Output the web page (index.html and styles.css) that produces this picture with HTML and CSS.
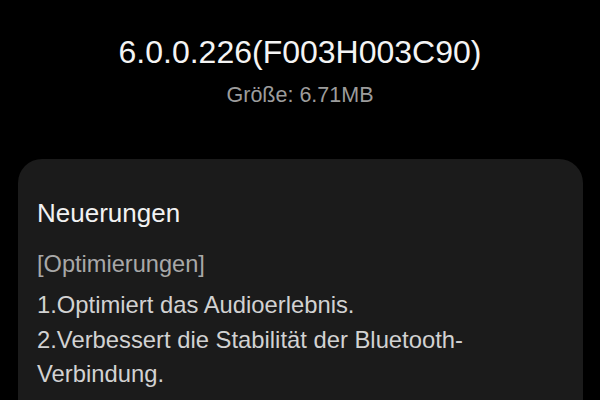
FILE: index.html
```html
<!DOCTYPE html>
<html lang="de">
<head>
  <meta charset="UTF-8" />
  <meta name="viewport" content="width=device-width, initial-scale=1.0"/>
  <title>Software-Update</title>
  <link rel="stylesheet" href="styles.css">
</head>
<body>

  <div class="header">
    <div class="version">6.0.0.226(F003H003C90)</div>
    <div class="size">Größe: 6.71MB</div>
  </div>

  <div class="card">
    <h3>Neuerungen</h3>
    <div class="tag">[Optimierungen]</div>
    <ul>
      <li>1.Optimiert das Audioerlebnis.</li>
      <li>2.Verbessert die Stabilität der Bluetooth-Verbindung.</li>
      <li>3.Verbessert die Systemstabilität.</li>
    </ul>
  </div>

</body>
</html>
```

FILE: styles.css
```css
body { font-family: "Liberation Sans", Arial, sans-serif; background: #000; color: #fff; margin: 0; padding: 0; }
.header { text-align: center; padding-top: 34px; }
.version { font-size: 32px; line-height: 36px; color: #f4f4f4; }
.size { font-size: 21.5px; line-height: 26px; color: #9c9c9c; margin-top: 12px; }
.card { background: #1b1b1b; margin: 51px 17px 0 18px; border-radius: 24px; padding: 39px 20px 20px 19px; }
.card h3 { font-size: 26px; line-height: 30px; font-weight: normal; color: #f2f2f2; margin: 0; }
.tag { font-size: 23.6px; line-height: 35px; color: #a8a8a8; margin-top: 19px; }
ul { list-style: none; padding: 0; margin: 6px 0 0; }
li { font-size: 23.8px; line-height: 34px; color: #d2d2d2; margin-bottom: 1px; }
```
